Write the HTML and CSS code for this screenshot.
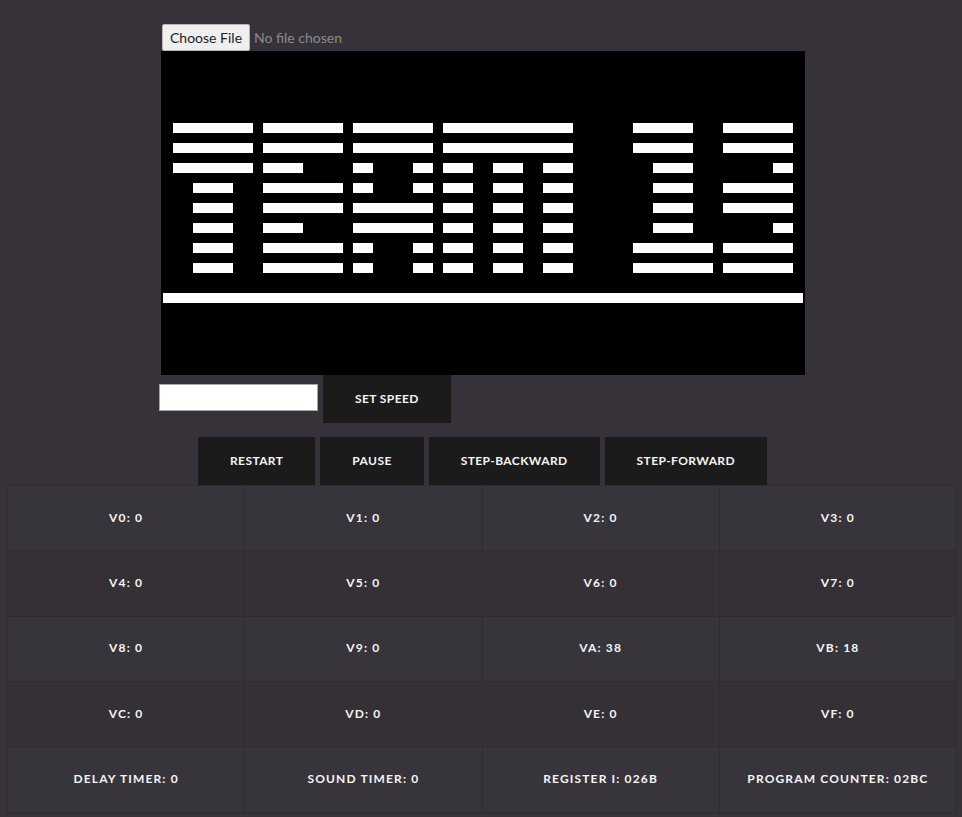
FILE: index.html
```html
<!DOCTYPE html>
<html>
<head>
<meta charset="utf-8">
<title>CHIP-8</title>
<link rel="stylesheet" href="styles.css">
</head>
<body>
<div class="emulator">
  <input class="file-input" type="file">
  <svg class="screen" viewBox="0 0 64 32" width="640" height="320" shape-rendering="crispEdges">
    <rect width="64" height="32" fill="#000"/>
    <g fill="#fff">
      <!-- row 7 -->
      <rect x="1" y="7" width="8" height="1"/><rect x="10" y="7" width="8" height="1"/><rect x="19" y="7" width="8" height="1"/><rect x="28" y="7" width="13" height="1"/><rect x="47" y="7" width="6" height="1"/><rect x="56" y="7" width="7" height="1"/>
      <!-- row 9 -->
      <rect x="1" y="9" width="8" height="1"/><rect x="10" y="9" width="8" height="1"/><rect x="19" y="9" width="8" height="1"/><rect x="28" y="9" width="13" height="1"/><rect x="47" y="9" width="6" height="1"/><rect x="56" y="9" width="7" height="1"/>
      <!-- row 11 -->
      <rect x="1" y="11" width="8" height="1"/><rect x="10" y="11" width="4" height="1"/><rect x="19" y="11" width="2" height="1"/><rect x="25" y="11" width="2" height="1"/><rect x="28" y="11" width="3" height="1"/><rect x="33" y="11" width="3" height="1"/><rect x="38" y="11" width="3" height="1"/><rect x="49" y="11" width="4" height="1"/><rect x="61" y="11" width="2" height="1"/>
      <!-- row 13 -->
      <rect x="3" y="13" width="4" height="1"/><rect x="10" y="13" width="8" height="1"/><rect x="19" y="13" width="2" height="1"/><rect x="25" y="13" width="2" height="1"/><rect x="28" y="13" width="3" height="1"/><rect x="33" y="13" width="3" height="1"/><rect x="38" y="13" width="3" height="1"/><rect x="49" y="13" width="4" height="1"/><rect x="56" y="13" width="7" height="1"/>
      <!-- row 15 -->
      <rect x="3" y="15" width="4" height="1"/><rect x="10" y="15" width="8" height="1"/><rect x="19" y="15" width="8" height="1"/><rect x="28" y="15" width="3" height="1"/><rect x="33" y="15" width="3" height="1"/><rect x="38" y="15" width="3" height="1"/><rect x="49" y="15" width="4" height="1"/><rect x="56" y="15" width="7" height="1"/>
      <!-- row 17 -->
      <rect x="3" y="17" width="4" height="1"/><rect x="10" y="17" width="4" height="1"/><rect x="19" y="17" width="8" height="1"/><rect x="28" y="17" width="3" height="1"/><rect x="33" y="17" width="3" height="1"/><rect x="38" y="17" width="3" height="1"/><rect x="49" y="17" width="4" height="1"/><rect x="61" y="17" width="2" height="1"/>
      <!-- row 19 -->
      <rect x="3" y="19" width="4" height="1"/><rect x="10" y="19" width="8" height="1"/><rect x="19" y="19" width="2" height="1"/><rect x="25" y="19" width="2" height="1"/><rect x="28" y="19" width="3" height="1"/><rect x="33" y="19" width="3" height="1"/><rect x="38" y="19" width="3" height="1"/><rect x="47" y="19" width="8" height="1"/><rect x="56" y="19" width="7" height="1"/>
      <!-- row 21 -->
      <rect x="3" y="21" width="4" height="1"/><rect x="10" y="21" width="8" height="1"/><rect x="19" y="21" width="2" height="1"/><rect x="25" y="21" width="2" height="1"/><rect x="28" y="21" width="3" height="1"/><rect x="33" y="21" width="3" height="1"/><rect x="38" y="21" width="3" height="1"/><rect x="47" y="21" width="8" height="1"/><rect x="56" y="21" width="7" height="1"/>
      <!-- row 24 -->
      <rect x="0" y="24" width="64" height="1"/>
    </g>
  </svg>
  <div class="speed-row">
    <input class="speed-input" type="text">
    <button class="btn">SET SPEED</button>
  </div>
</div>
<div class="controls">
  <button class="btn">RESTART</button>
  <button class="btn">PAUSE</button>
  <button class="btn">STEP-BACKWARD</button>
  <button class="btn">STEP-FORWARD</button>
</div>
<table class="registers">
  <tr><td>V0: 0</td><td>V1: 0</td><td>V2: 0</td><td>V3: 0</td></tr>
  <tr><td>V4: 0</td><td>V5: 0</td><td>V6: 0</td><td>V7: 0</td></tr>
  <tr><td>V8: 0</td><td>V9: 0</td><td>VA: 38</td><td>VB: 18</td></tr>
  <tr><td>VC: 0</td><td>VD: 0</td><td>VE: 0</td><td>VF: 0</td></tr>
  <tr><td>DELAY TIMER: 0</td><td>SOUND TIMER: 0</td><td>REGISTER I: 026B</td><td>PROGRAM COUNTER: 02BC</td></tr>
</table>
</body>
</html>
```
FILE: styles.css
```css
html, body {
  margin: 0;
  padding: 0;
}
body {
  background: #37323a;
  font-family: Lato, "Open Sans", "Liberation Sans", sans-serif;
  color: #f4f4f4;
  padding-top: 24px;
}
.emulator {
  width: 644px;
  margin: 0 auto;
  display: flex;
  flex-direction: column;
  align-items: flex-start;
}
.file-input {
  margin-left: 3px;
  height: 27px;
  font-family: Lato, "Open Sans", sans-serif;
  font-size: 14px;
  color: #8a8a8a;
}
.file-input::file-selector-button {
  font-family: Lato, "Open Sans", sans-serif;
  font-size: 14px;
  color: #222;
  background: #efefef;
  border: 1px solid #b5b5b5;
  border-radius: 2px;
  height: 27px;
  padding: 0 7px;
  margin-right: 4px;
}
.screen {
  display: block;
  margin-left: 2px;
  border: 2px solid #000;
  background: #000;
}
.speed-row {
  display: flex;
  align-items: flex-start;
  gap: 5px;
}
.speed-input {
  margin: 9px 0 0 0;
  width: 159px;
  height: 27px;
  box-sizing: border-box;
  border: 1px solid #a6a6a6;
  background: #fff;
  padding: 0 4px;
}
.btn {
  box-sizing: border-box;
  height: 48px;
  padding: 0 32px 2px;
  border: none;
  background: #1c1b1c;
  color: #f4f4f4;
  font-family: Lato, "Open Sans", sans-serif;
  font-weight: 700;
  font-size: 12px;
  letter-spacing: 0.4px;
}
.controls {
  display: flex;
  justify-content: center;
  gap: 5px;
  margin-top: 14px;
  padding-left: 3px;
}
.registers {
  margin-left: 7px;
  width: 950px;
  border-collapse: collapse;
  table-layout: fixed;
}
.registers td {
  height: 62.4px;
  padding: 0 0 2px;
  text-align: center;
  border: 1px solid #302c33;
  font-weight: 700;
  font-size: 12px;
  letter-spacing: 1.15px;
  color: #f4f4f4;
  background: #38343b;
}
.registers tr:nth-child(even) td {
  background: #343036;
}
```
